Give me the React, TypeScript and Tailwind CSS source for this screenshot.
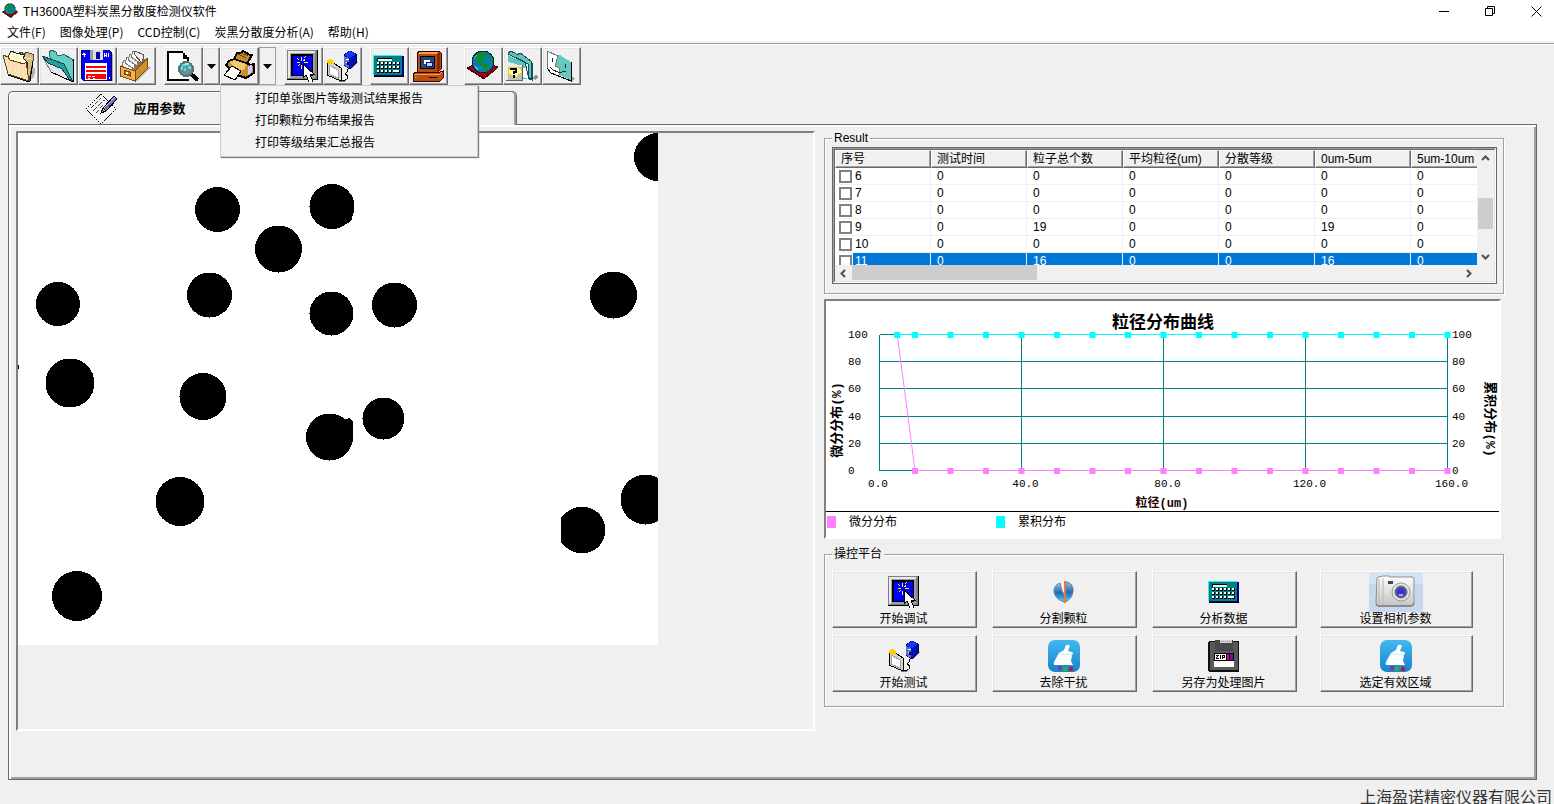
import { useState } from "react";
import type { ReactNode } from "react";

type IconProps = { size?: number };

function Icon({ size = 32, children }: { size?: number; children: ReactNode }) {
  return (
    <svg width={size} height={size} viewBox="0 0 32 32" shapeRendering="crispEdges" aria-hidden="true" className="block shrink-0">
      {children}
    </svg>
  );
}

function OpenFolderIcon() {
  return (
    <Icon>
      <path d="M26 31l5-5 2-7-4-2-3 8z" fill="#b0b0b0" />
      <path d="M16 3l2-1 3 2 3-2 7 3-1 6-4 20-7-8z" fill="#d9bf85" stroke="#5a4620" />
      <path d="M17 5l3 1m1 1l3 0m1 1l3 1" stroke="#fff2c0" fill="none" />
      <path d="M5 7l3-6 5 2 9 2-2 3 4 4v14L8 20z" fill="#fffde0" stroke="#222" />
      <path d="M8 5l10 3-1 3-9-3z" fill="#fff7a8" />
      <path d="M0 5l5 2 2 3 14 4 2-2 3 19-3-1-18-6z" fill="#fbdcae" stroke="#5a4620" />
      <path d="M3 9l4 14M7 12l3 13M11 13l3 13M15 14l3 14M19 16l3 13" stroke="#fff4d8" strokeDasharray="1 1" fill="none" />
      <path d="M5 25l18 6h4l3-20" stroke="#000" fill="none" />
    </Icon>
  );
}

function TealFolderIcon() {
  return (
    <Icon>
      <path d="M7 3l2-3 5 2 1 3 4 1 2-2 9 5 1 2v21l-4-3L9 10z" fill="#66cdc6" stroke="#206868" />
      <path d="M3 11l19 8 7 12-20-9z" fill="#e4e4ee" stroke="#777" />
      <path d="M0 6l22 8 8 16-3-1-7-10L6 13z" fill="#2c9c98" stroke="#0c4848" />
      <path d="M9 22l20 9h2V9" stroke="#000" fill="none" />
    </Icon>
  );
}

function SaveIcon() {
  return (
    <Icon>
      <path d="M3 31h29V4h-2v26H3z" fill="#a8a8a8" />
      <path d="M0 0h28l2 2v28H2l-2-2z" fill="#0000f5" stroke="#000060" />
      <path d="M9 0h13v10H9z" fill="#dcdcdc" />
      <path d="M15 2h4v7h-4z" fill="#0000a8" />
      <path d="M9 0h3v10H9z" fill="#9c9c9c" />
      <path d="M2 3h1v4M1 4h4M23 3v4M25 3v4M23 5h3M27 3v4" stroke="#fff" fill="none" />
      <path d="M4 13h22v17H4z" fill="#fff" />
      <path d="M5 16h20v2H5zm0 4h20v2H5zm0 4h20v5H5z" fill="#f00" />
      <path d="M7 26h3m1 0h3m-7 2h2m3 0h2" stroke="#fff" />
      <path d="M28 27h1v2h-1z" fill="#fff" />
    </Icon>
  );
}

function CardBoxIcon() {
  return (
    <Icon>
      <path d="M15 31l14-15 2 2-14 13z" fill="#c0c0c0" />
      <path d="M1 17l2-7 9 4 15-6v5L15 23z" fill="#a07030" />
      <path d="M2 16l2-6 9 3-1 8z" fill="#f4f4f4" stroke="#888" />
      <path d="M5 13l2-6 9 3-2 9z" fill="#fff" stroke="#777" />
      <path d="M8 10l2-6 9 3-2 9z" fill="#eee" stroke="#777" />
      <path d="M11 7l2-6 9 3-2 9z" fill="#fff" stroke="#777" />
      <path d="M14 4l1-3 9 4-2 8z" fill="#eee" stroke="#555" />
      <path d="M0 16l15 5v10L0 26z" fill="#efb050" stroke="#7a4a00" />
      <path d="M15 21L27 9v10L15 31z" fill="#d09030" stroke="#7a4a00" />
      <path d="M4 20l6 2v4l-6-2z" fill="#b07020" stroke="#704000" />
      <path d="M6 22h2v2H6z" fill="#fff" />
    </Icon>
  );
}

function PreviewIcon() {
  return (
    <Icon>
      <path d="M1 1h15l6 6v23H1z" fill="#fff" />
      <path d="M0 1h16v2h2v2h2v2h2v6h-2V9h-4V3H2v26h20v2H0z" fill="#000" />
      <path d="M24 24l7 6" stroke="#000" strokeWidth="4" />
      <circle cx="19" cy="19" r="8" fill="#547678" />
      <circle cx="19" cy="19" r="6" fill="#748c8e" />
      <path d="M14 20h2v-4h3v-2h-4v2h-1zm3-2h2v3h-2zm4-2h3v3h-3z" fill="#35ede9" />
      <path d="M18 13h4v2h-4z" fill="#b8dede" />
    </Icon>
  );
}

function PrinterIcon() {
  return (
    <Icon>
      <path d="M11 9l3-6 4 0 2-2 7 4 2 0-4 7-2 3z" fill="#c08c30" stroke="#000" strokeWidth="2" />
      <path d="M15 4l8 4M18 3l7 3" stroke="#6b4400" />
      <path d="M3 15l3-4 5-2 17 6 3-1v9l-8 5-9-3z" fill="#c89030" stroke="#000" strokeWidth="2" />
      <path d="M6 12l5-2 12 4-1 5-5 3z" fill="#efc96c" />
      <path d="M25 16l4-1v7l-4 3z" fill="#d0c8ff" />
      <path d="M9 16l9 5-6 9-11-5z" fill="#fff" stroke="#000" />
    </Icon>
  );
}

function DebugIcon() {
  return (
    <Icon>
      <path d="M0 0h31v30H0z" fill="#000" />
      <path d="M0 0h30v29H0z" fill="#808080" />
      <path d="M1 1h27v27H1z" fill="#e8e8e8" />
      <path d="M3 3h25v25H3z" fill="#a0a0a0" />
      <path d="M4 4h22v22H4z" fill="#000" />
      <path d="M6 6h19v19H6z" fill="#0000ff" />
      <path d="M14 6v4m0 4v4M9 12h3m4 0h4M10 8l2 2m4-2l2-2m-8 10l2-2m4-4l2-1" stroke="#ff0" fill="none" transform="translate(0.5 0.5)" />
      <path d="M16 14v14l3-3 3 7h4l-3-8h4z" fill="#fff" stroke="#000" />
    </Icon>
  );
}

function TestIcon() {
  return (
    <Icon>
      <path d="M25 19l7-6-1-2-6 5z" fill="#9c9c9c" />
      <path d="M18 5l6-4 6 3v9l-6 6-6-4z" fill="#0010b0" stroke="#000030" />
      <path d="M18 5l6-4 6 3-6 4z" fill="#1038ff" />
      <path d="M18 6l5 2v10l-5-3z" fill="#5870d8" />
      <path d="M20 9h3m-3 3h3" stroke="#fff" />
      <path d="M21 12h2v3h-2z" fill="#000040" />
      <path d="M21 19v3l-2 2 3 2-1 3-4 2-3-1" stroke="#000" fill="none" />
      <path d="M1 11l2-1 12 8v13L1 25z" fill="#d4d4d4" stroke="#000" />
      <path d="M1 10l4-1 3 3v3l-3-1-2 1-2-2z" fill="#ffd000" />
      <path d="M3 15l9 5v8l-9-4z" fill="#fff" stroke="#a0a0a0" />
      <path d="M13 31h6l2-2" stroke="#777" fill="none" />
    </Icon>
  );
}

const calcKeys = [0, 1, 2, 3, 4, 5];

function CalculatorIcon() {
  return (
    <Icon>
      <path d="M1 6h30v21H1z" fill="#000080" />
      <path d="M0 5h29v20H0z" fill="#008080" />
      <path d="M0 5h29v1H1v19H0z" fill="#40e8e8" />
      <path d="M1 26h30v1H1z" fill="#000" />
      <path d="M4 8h15v3H4z" fill="#000" />
      <path d="M5 9h14v2H5z" fill="#f4f0e8" />
      {[12, 16, 20].map((y) =>
        calcKeys.map((x) => (
          <g key={`${x}-${y}`}>
            <rect x={4 + x * 4} y={y} width="3" height="3" fill="#000" />
            <rect x={4 + x * 4} y={y} width="2" height="2" fill="#fff" />
          </g>
        )),
      )}
      <path d="M21 20h5v2h-5z" fill="#fff" />
    </Icon>
  );
}

function ComputerIcon() {
  return (
    <Icon>
      <path d="M5 3l3-2h19l2 2v16l-3 3H5z" fill="#b84c10" stroke="#300" />
      <path d="M25 4l3-2v16l-3 3z" fill="#7c2c00" />
      <path d="M6 3l2-1h18l-2 2H6z" fill="#ff9a50" />
      <path d="M8 6h15v13H8z" fill="#000" />
      <path d="M9 7h13v11H9z" fill="#28487c" />
      <path d="M12 10h6v4h-6z" fill="#fff" />
      <path d="M14 12h6v4h-6z" fill="#c8d4ff" stroke="#001080" />
      <path d="M1 24l3-2h24l3-1v7l-3 3H1z" fill="#bc4c10" stroke="#300" />
      <path d="M2 24h26l2-2" fill="none" stroke="#ff9a50" />
      <path d="M17 27h8v1h-8z" fill="#200" />
      <path d="M3 27h2v1H3z" fill="#0f0" />
    </Icon>
  );
}

function GlobeIcon({ size }: IconProps) {
  return (
    <Icon size={size}>
      <path d="M0 18l15-7 16 6-14 12z" fill="#b00010" stroke="#200" />
      <path d="M2 19l15 8 12-9v2L17 29z" fill="#600" />
      <circle cx="16" cy="12" r="11" fill="#087cae" stroke="#002848" />
      <path d="M8 5l5-3 6 1 2 3-4 1 1 3-3 1 1 3-3 2-3-4-3-3zM17 13l6 2-2 5-4 2-2-5zM22 5l4 4v5l-3-4z" fill="#0a8c38" />
      <path d="M7 8l3-3M8 16l3 4" stroke="#50c8e8" />
    </Icon>
  );
}

function HelpIcon() {
  return (
    <Icon>
      <path d="M26 28l4-3 2 2-2 3z" fill="#909090" />
      <path d="M2 4l2-3 5 2 2 2 3-2 11 8 1 2v17l-4-3V14z" fill="#5fc4c0" stroke="#145050" />
      <path d="M2 5l17 8 3 16h-5V16L2 12z" fill="#5fc4c0" />
      <path d="M17 18h3l2 11-5-2z" fill="#fff" />
      <path d="M2 4l17 8 4 17h2V12" stroke="#145050" fill="none" />
      <path d="M0 15h17v16H0z" fill="#606060" />
      <path d="M0 15h16v15H0z" fill="#e8e8e8" />
      <path d="M2 17h14v13H2z" fill="#c0c0c0" />
      <path d="M4 17h8l3 3v3l-4 3H6l-4-3v-3z" fill="#fff8b8" stroke="#e8d800" />
      <path d="M5 20v-1h5v3H8v2M8 25v3" stroke="#000" strokeWidth="2" fill="none" />
    </Icon>
  );
}

function FacesIcon() {
  return (
    <Icon>
      <path d="M23 30l4-3 3 1-3 3z" fill="#a0a0a0" />
      <path d="M2 1l11 6-3 9 4 2v9L6 23l-4-5z" fill="#fff" />
      <path d="M13 5l2 0 11 7v18l-12-5v-7l-4-2z" fill="#68c8c0" />
      <path d="M2 18V1l11 5M13 6l-3 10 4 2v7" stroke="#777" fill="none" />
      <path d="M2 18l4 5 20 8V12" stroke="#000" fill="none" />
      <path d="M7 8v4M20 14v4M5 17l3 3 5 2 4 0 4-1" stroke="#103030" fill="none" />
    </Icon>
  );
}

function NotePenIcon() {
  return (
    <svg width="34" height="32" viewBox="0 0 34 32" shapeRendering="crispEdges" aria-hidden="true">
      <path d="M16 1l15 15-15 15L1 16z" fill="#f4f4f4" />
      <path d="M16 1l15 15-15 15L1 16z" fill="none" stroke="#000" strokeDasharray="2 1" />
      <path d="M6 15l3-3m1-1l3-3m1-1l2-2M8 18l4-4m1-1l4-4m1-1l2-1M11 20l3-3m1-2l3-3" stroke="#444" />
      <path d="M18 15l11-12 3 3-11 12-5 2z" fill="#7068b8" stroke="#000" />
      <path d="M19 15l11-11" stroke="#c8c4f8" />
      <path d="M16 20l2-5 3 3z" fill="#f0b880" stroke="#000" />
    </svg>
  );
}

function SplitIcon() {
  return (
    <svg width="32" height="32" viewBox="0 0 32 32" aria-hidden="true">
      <defs>
        <linearGradient id="ball" x1="0" y1="0" x2="0" y2="1">
          <stop offset="0" stopColor="#a8bed0" />
          <stop offset="0.5" stopColor="#1f6cb4" />
          <stop offset="0.75" stopColor="#3696d8" />
          <stop offset="1" stopColor="#82dcf8" />
        </linearGradient>
      </defs>
      <path d="M12 7c-9 3-8 15 4 19v-8l-2-3z" fill="url(#ball)" stroke="#5c88ac" />
      <path d="M18 6c10 1 9 16-1 20z" fill="url(#ball)" stroke="#487ca8" />
      <path d="M16 5h2v22h-2z" fill="#e87848" />
    </svg>
  );
}

function BroomIcon() {
  return (
    <svg width="32" height="32" viewBox="0 0 32 32" aria-hidden="true">
      <defs>
        <linearGradient id="sky" x1="0" y1="0" x2="0" y2="1">
          <stop offset="0" stopColor="#42b8f0" />
          <stop offset="1" stopColor="#1684cc" />
        </linearGradient>
      </defs>
      <rect width="32" height="32" rx="7" fill="url(#sky)" />
      <path d="M18 5q3-1 4 1l-2 5 4 1q2 1 0 3l-1 6 2 4H9l-3 0q-1-2 1-5l4-7 5-3z" fill="#fff" />
      <path d="M12 14l12 1" stroke="#c8e8f8" />
      <path d="M10 26h4v4h-4z" fill="#8830b8" />
      <path d="M15 27h4v4h-4z" fill="#28b828" />
      <path d="M21 27h4v4h-4z" fill="#c01838" />
    </svg>
  );
}

function ZipIcon() {
  return (
    <Icon>
      <path d="M1 1h30v31H1l-1-1V3z" fill="#101010" />
      <path d="M2 2h28v28H2z" fill="#585858" />
      <path d="M7 0h18v11H7z" fill="#484848" />
      <path d="M12 0h12v3H12z" fill="#d4d4d4" />
      <path d="M13 1h10" stroke="#909090" strokeDasharray="1 1" />
      <path d="M6 13h20v14H6z" fill="#fff" />
      <path d="M6 13h20v8H6z" fill="#000" />
      <path d="M7 14h11v6H7z" fill="#fff" />
      <path d="M19 14h2v6h-2z" fill="#f00060" />
      <path d="M22 14h3v6h-3z" fill="#8000c0" />
      <path d="M8 15.5h3M10 16.5h-1M9 17.5h-1M8 18.5h3M12.500 15v4M14.500 15v4M15 15.500h2M16.500 16v2M15 17.500h1" stroke="#000" />
    </Icon>
  );
}

function CameraIcon() {
  return (
    <svg width="54" height="40" viewBox="0 0 54 40" aria-hidden="true" className="shrink-0">
      <defs>
        <linearGradient id="cam" x1="0" y1="0" x2="0" y2="1">
          <stop offset="0" stopColor="#fdfdfd" />
          <stop offset="1" stopColor="#c4c4c4" />
        </linearGradient>
      </defs>
      <rect width="54" height="40" fill="#c8d8ec" />
      <rect width="54" height="12" fill="#d5e2f2" />
      <path d="M8 6q0-1 2-1l4-1h6l1 1h22q2 0 2 2v24q0 3-3 3H9q-2 0-2-3z" fill="url(#cam)" stroke="#909090" />
      <path d="M10 7v25M14 6v27" stroke="#b8b8b8" />
      <path d="M7 32q1 2 3 2h32q3 0 3-3" stroke="#686868" strokeWidth="1" fill="none" />
      <rect x="19" y="9" width="5" height="3" fill="#444" />
      <circle cx="32" cy="20" r="9" fill="#e4e4e4" stroke="#999" />
      <circle cx="32" cy="20" r="6" fill="#5656a0" stroke="#666" />
      <circle cx="32" cy="20" r="4" fill="#3c34d0" />
      <path d="M30 23h4" stroke="#90b0ff" strokeWidth="2" />
    </svg>
  );
}

const menus = ["文件(F)", "图像处理(P)", "CCD控制(C)", "炭黑分散度分析(A)", "帮助(H)"];
const printReports = ["打印单张图片等级测试结果报告", "打印颗粒分布结果报告", "打印等级结果汇总报告"];
const columns = ["序号", "测试时间", "粒子总个数", "平均粒径(um)", "分散等级", "0um-5um", "5um-10um"];

const rows = [
  { id: 6, values: [0, 0, 0, 0, 0, 0] },
  { id: 7, values: [0, 0, 0, 0, 0, 0] },
  { id: 8, values: [0, 0, 0, 0, 0, 0] },
  { id: 9, values: [0, 19, 0, 0, 19, 0] },
  { id: 10, values: [0, 0, 0, 0, 0, 0] },
  { id: 11, values: [0, 16, 0, 0, 16, 0] },
];

// cx, cy, r in image pixels
const particles = [
  [199.5, 76.5, 22.5],
  [314, 73.5, 22.5],
  [260.5, 116, 23.5],
  [40, 171, 22],
  [191.5, 162, 22.5],
  [313.5, 180.5, 22],
  [376.5, 172, 22.5],
  [595.5, 162, 23.5],
  [52, 250, 24.5],
  [185, 263.5, 23.5],
  [311.5, 304, 23.5],
  [365.5, 285.5, 21],
  [162, 368.5, 24.5],
  [564, 397, 23.5],
  [627.5, 366.5, 25],
  [59, 463, 25],
  [640, 24, 24],
];

const raised =
  "border border-t-white border-l-white border-r-[#696969] border-b-[#696969] shadow-[inset_-1px_-1px_0_#a0a0a0,inset_1px_1px_0_#e3e3e3]";

function ToolButton({ label, children }: { label: string; children: ReactNode }) {
  return (
    <button
      type="button"
      aria-label={label}
      className={`flex h-[38px] w-[39px] shrink-0 items-center justify-center bg-[#f0f0f0] pr-[2px] ${raised}`}
    >
      {children}
    </button>
  );
}

function DropArrow({ label, open, onClick }: { label: string; open?: boolean; onClick?: () => void }) {
  return (
    <button
      type="button"
      aria-label={label}
      onClick={onClick}
      className={`flex h-[38px] w-[17px] shrink-0 items-center justify-center bg-[#f0f0f0] ${open ? "border border-[#a0a0a0]" : raised}`}
    >
      <svg width="9" height="5" viewBox="0 0 9 5" aria-hidden="true">
        <path d="M0 0h9L4.500 5z" fill="#000" />
      </svg>
    </button>
  );
}

function TitleBar() {
  return (
    <header className="bg-white font-['Noto_Sans_CJK_SC',sans-serif]">
      <div className="flex h-[22px] items-center justify-between">
        <div className="flex items-center gap-[5px] pl-[2px]">
          <GlobeIcon size={16} />
          <h1 className="text-xs">TH3600A塑料炭黑分散度检测仪软件</h1>
        </div>
        <div className="flex gap-[10px]">
          <button type="button" aria-label="最小化" className="flex h-5 w-9 items-center justify-center">
            <svg width="11" height="11" viewBox="0 0 11 11"><path d="M0 5.500h10" stroke="#000" /></svg>
          </button>
          <button type="button" aria-label="还原" className="flex h-5 w-9 items-center justify-center">
            <svg width="11" height="11" viewBox="0 0 11 11" fill="none" stroke="#000">
              <path d="M.5 2.500h7v7h-7zM2.500 2.500v-2h7v7h-2" />
            </svg>
          </button>
          <button type="button" aria-label="关闭" className="flex h-5 w-9 items-center justify-center">
            <svg width="11" height="11" viewBox="0 0 11 11"><path d="M.5.5l10 10M10.500.5l-10 10" stroke="#000" /></svg>
          </button>
        </div>
      </div>
      <nav className="flex h-[19px] items-center gap-[14px] pl-[7px] text-xs">
        {menus.map((m) => (
          <button key={m} type="button" className="whitespace-nowrap">
            {m}
          </button>
        ))}
      </nav>
    </header>
  );
}

function Toolbar() {
  const [open, setOpen] = useState(true);
  return (
    <div className="flex gap-2 border-t border-[#a0a0a0] pt-[3px] shadow-[inset_0_1px_0_#fff]">
      <div className="flex">
        <ToolButton label="打开"><OpenFolderIcon /></ToolButton>
        <ToolButton label="目录"><TealFolderIcon /></ToolButton>
        <ToolButton label="保存"><SaveIcon /></ToolButton>
        <ToolButton label="归档"><CardBoxIcon /></ToolButton>
      </div>
      <div className="flex">
        <ToolButton label="预览"><PreviewIcon /></ToolButton>
        <DropArrow label="预览选项" />
        <div className="relative flex">
          <ToolButton label="打印"><PrinterIcon /></ToolButton>
          <DropArrow label="打印选项" open={open} onClick={() => setOpen(!open)} />
          {open && (
            <div
              role="menu"
              className="absolute top-full left-0 z-20 flex w-[258px] flex-col border border-[#cccccc] bg-[#f2f2f2] pt-[1px] pb-[3px] font-['Noto_Sans_CJK_SC',sans-serif] shadow-[1px_1px_1px_#808080]"
            >
              {printReports.map((r) => (
                <button key={r} type="button" role="menuitem" className="h-[22px] pl-[34px] text-left text-xs whitespace-nowrap">
                  {r}
                </button>
              ))}
            </div>
          )}
        </div>
      </div>
      <div className="flex">
        <ToolButton label="调试"><DebugIcon /></ToolButton>
        <ToolButton label="测试"><TestIcon /></ToolButton>
      </div>
      <div className="mr-2 flex">
        <ToolButton label="分析"><CalculatorIcon /></ToolButton>
        <ToolButton label="计算机"><ComputerIcon /></ToolButton>
      </div>
      <div className="flex">
        <ToolButton label="网站"><GlobeIcon /></ToolButton>
        <ToolButton label="帮助"><HelpIcon /></ToolButton>
        <ToolButton label="关于"><FacesIcon /></ToolButton>
      </div>
    </div>
  );
}

function ParticleImage() {
  return (
    <div className="h-[600px] overflow-hidden border-2 border-t-[#808080] border-r-white border-b-white border-l-[#808080]">
      <svg width="640" height="512" viewBox="0 0 640 512" shapeRendering="crispEdges" className="block bg-white" role="img" aria-label="颗粒图像">
        {particles.map(([cx, cy, r]) => (
          <circle key={`${cx}-${cy}`} cx={cx} cy={cy} r={r} />
        ))}
        <path d="M328 80h7l-1 6-3 4-3-2zM325 287l6-2 4 4v14h-6zM543 384l4-4 6 0v34h-5l-5-4zM0 232h1v4H0z" />
        <path d="M538 380h5v34h-5z" fill="#fff" />
      </svg>
    </div>
  );
}

function ScrollButton({ label, d }: { label: string; d: string }) {
  return (
    <button type="button" aria-label={label} className="flex h-[17px] w-[17px] shrink-0 items-center justify-center">
      <svg width="9" height="9" viewBox="0 0 9 9" fill="none" stroke="#505050" strokeWidth="2">
        <path d={d} />
      </svg>
    </button>
  );
}

function ResultTable() {
  const cell = "h-[17px] border-r border-b border-[#f0f0f0] leading-4";
  return (
    <div className="border border-[#696969]">
      <div className="border border-t-[#a0a0a0] border-r-white border-b-white border-l-[#a0a0a0]">
        <div className="grid grid-cols-[minmax(0,1fr)_17px] grid-rows-[115px_16px] border border-t-[#696969] border-r-[#e3e3e3] border-b-[#e3e3e3] border-l-[#696969]">
          <div className="overflow-hidden bg-white">
            <table className="w-[672px] table-fixed border-separate border-spacing-0 text-xs">
              <thead>
                <tr>
                  {columns.map((c) => (
                    <th
                      key={c}
                      className="h-[18px] border border-t-white border-r-[#696969] border-b-[#696969] border-l-white bg-[#f0f0f0] pl-[5px] text-left leading-4 font-normal whitespace-nowrap shadow-[inset_-1px_-1px_0_#a0a0a0]"
                    >
                      {c}
                    </th>
                  ))}
                </tr>
              </thead>
              <tbody>
                {rows.map((row) => {
                  const active = row.id === 11;
                  return (
                    <tr key={row.id}>
                      <td className={cell}>
                        <label className="flex h-4 items-center pl-1">
                          <input type="checkbox" className="mr-[1px] size-[13px] appearance-none border-2 border-[#808080] bg-white checked:bg-[#0078d7]" />
                          <span className={active ? "flex-1 bg-[#0078d7] pl-[2px] text-white" : "flex-1 pl-[2px]"}>{row.id}</span>
                        </label>
                      </td>
                      {row.values.map((v, i) => (
                        <td key={i} className={`${cell} pl-[6px] ${active ? "bg-[#0078d7] text-white" : ""}`}>
                          {v}
                        </td>
                      ))}
                    </tr>
                  );
                })}
              </tbody>
            </table>
          </div>
          <div className="flex flex-col">
            <ScrollButton label="向上" d="M1 6l3.500-3.500L8 6" />
            <div className="mt-[31px] h-[31px] w-[15px] self-center bg-[#cdcdcd]" />
            <div className="flex-1" />
            <ScrollButton label="向下" d="M1 3l3.500 3.500L8 3" />
          </div>
          <div className="flex">
            <ScrollButton label="向左" d="M6 1L2.500 4.500 6 8" />
            <div className="h-[15px] w-[185px] bg-[#cdcdcd]" />
            <div className="flex-1" />
            <ScrollButton label="向右" d="M3 1l3.500 3.500L3 8" />
          </div>
        </div>
      </div>
    </div>
  );
}

const plot = { left: 53.5, top: 33.5, width: 568, height: 136 };
const sizes = [10, 20, 30, 40, 50, 60, 70, 80, 90, 100, 110, 120, 130, 140, 150, 160];
const xOf = (v: number) => plot.left + (v / 160) * plot.width;
const yOf = (v: number) => plot.top + ((100 - v) / 100) * plot.height;

function DistributionChart() {
  const bottom = yOf(0);
  return (
    <section className="mt-[5px] mr-[3px] border-2 border-t-[#808080] border-r-white border-b-white border-l-[#808080] bg-white">
      <svg viewBox="0 0 673 210" className="block w-full font-['Liberation_Mono','Noto_Sans_CJK_SC',monospace] text-[11px]" role="img" aria-label="粒径分布曲线">
        <text x="337" y="27" textAnchor="middle" className="text-[17px] font-bold">粒径分布曲线</text>
        <g stroke="#008080" fill="none" shapeRendering="crispEdges">
          {[0, 20, 40, 60, 80, 100].map((v) => (
            <path key={v} d={`M${plot.left} ${yOf(v)}h${plot.width}`} />
          ))}
          {[0, 40, 80, 120, 160].map((v) => (
            <path key={v} d={`M${xOf(v)} ${plot.top}v${plot.height}`} />
          ))}
        </g>
        <path d={`M${xOf(5)} ${yOf(100)}L${xOf(10)} ${bottom}H${xOf(160)}`} stroke="#ff80ff" fill="none" />
        <path d={`M${xOf(5)} ${yOf(100)}H${xOf(160)}`} stroke="#00ffff" fill="none" />
        {sizes.map((s) => (
          <rect key={s} x={xOf(s) - 3} y={bottom - 2.5} width="6" height="6" fill="#ff80ff" />
        ))}
        {[5, ...sizes].map((s) => (
          <rect key={s} x={xOf(s) - 3} y={plot.top - 2.5} width="6" height="6" fill="#00ffff" />
        ))}
        {[0, 20, 40, 60, 80, 100].map((v) => (
          <g key={v}>
            <text x="22" y={yOf(v) + 3.5}>{v}</text>
            <text x="626" y={yOf(v) + 3.5}>{v}</text>
          </g>
        ))}
        {[0, 40, 80, 120, 160].map((v) => (
          <text key={v} x={v === 0 ? 52 : xOf(v) + 4} y="186" textAnchor="middle">{v.toFixed(1)}</text>
        ))}
        <g textAnchor="middle" className="text-[13px] font-bold">
          <text x="336" y="206" fill="#200000" className="text-[12px]">粒径(um)</text>
          <text transform="translate(15 119) rotate(-90)">微分分布(%)</text>
          <text transform="translate(660 118) rotate(90)">累积分布(%)</text>
        </g>
      </svg>
      <div className="flex h-[26px] items-start border-t border-black pt-[2px] text-xs">
        <div className="flex w-[169px] items-center gap-[13px] pl-[1px]">
          <span className="h-3 w-[9px] bg-[#ff80ff]" />
          <span>微分分布</span>
        </div>
        <div className="flex items-center gap-[13px] pl-[1px]">
          <span className="h-3 w-[9px] bg-[#00ffff]" />
          <span>累积分布</span>
        </div>
      </div>
    </section>
  );
}

const actions = [
  { label: "开始调试", icon: <DebugIcon /> },
  { label: "分割颗粒", icon: <SplitIcon /> },
  { label: "分析数据", icon: <CalculatorIcon /> },
  { label: "设置相机参数", icon: <CameraIcon /> },
  { label: "开始测试", icon: <TestIcon /> },
  { label: "去除干扰", icon: <BroomIcon /> },
  { label: "另存为处理图片", icon: <ZipIcon /> },
  { label: "选定有效区域", icon: <BroomIcon /> },
];

function Group({ title, className, children }: { title: string; className: string; children: ReactNode }) {
  return (
    <fieldset className={`min-w-0 border border-[#a0a0a0] shadow-[1px_1px_0_#fff,inset_1px_1px_0_#fff] ${className}`}>
      <legend className="bg-[#f0f0f0] px-[2px] text-xs leading-[14px]">{title}</legend>
      {children}
    </fieldset>
  );
}

export default function App() {
  return (
    <div className="flex min-h-screen flex-col bg-[#f0f0f0] font-['Liberation_Sans','Noto_Sans_CJK_SC',sans-serif] text-black">
      <TitleBar />
      <div className="h-[2px]" />
      <Toolbar />

      <main className="mt-[6px] mr-[17px] ml-2 flex flex-1 flex-col">
        <div role="tablist" className="flex h-[33px]">
          <button
            type="button"
            role="tab"
            aria-selected="false"
            className="flex w-[254px] items-center justify-center gap-[14px] rounded-tl-[5px] border-t border-l border-[#696969] pt-[2px] text-[13px] font-bold shadow-[inset_1px_1px_0_#fff]"
          >
            <NotePenIcon />
            <span>应用参数</span>
          </button>
          <button
            type="button"
            role="tab"
            aria-selected="true"
            aria-label="测试结果"
            className="relative z-10 -mb-px w-[255px] rounded-tr-[5px] border-t border-r border-[#696969] bg-[#f0f0f0] shadow-[inset_-2px_0_0_#a0a0a0,inset_0_1px_0_#fff]"
          />
        </div>

        <div className="flex-1 border border-[#696969] shadow-[inset_2px_2px_0_#fff,inset_-2px_-2px_0_#a0a0a0]">
          <div className="grid grid-cols-[799fr_680fr] items-start gap-[9px] pt-[6px] pr-8 pl-[7px]">
            <ParticleImage />
            <div className="min-w-0">
              <Group title="Result" className="pr-[6px] pb-[9px] pl-[7px]">
                <div className="pt-[2px]">
                  <ResultTable />
                </div>
              </Group>
              <DistributionChart />
              <Group title="操控平台" className="mt-2 pr-[30px] pb-[14px] pl-[7px]">
                <div className="grid grid-cols-[145fr_145fr_145fr_161fr] gap-x-[15px] gap-y-[7px] pt-[10px]">
                  {actions.map((a) => (
                    <button
                      key={a.label}
                      type="button"
                      className={`flex h-[57px] flex-col items-center gap-[2px] pt-[2px] pr-[2px] text-xs leading-[14px] nth-[4n]:ml-2 ${raised}`}
                    >
                      <span className="flex h-9 shrink-0 items-center">{a.icon}</span>
                      <span>{a.label}</span>
                    </button>
                  ))}
                </div>
              </Group>
            </div>
          </div>
        </div>
      </main>

      <footer className="flex h-6 items-end justify-end pr-[2px] font-['Noto_Sans_CJK_SC',sans-serif] text-base leading-4 text-[#333333]">
        上海盈诺精密仪器有限公司
      </footer>
    </div>
  );
}
